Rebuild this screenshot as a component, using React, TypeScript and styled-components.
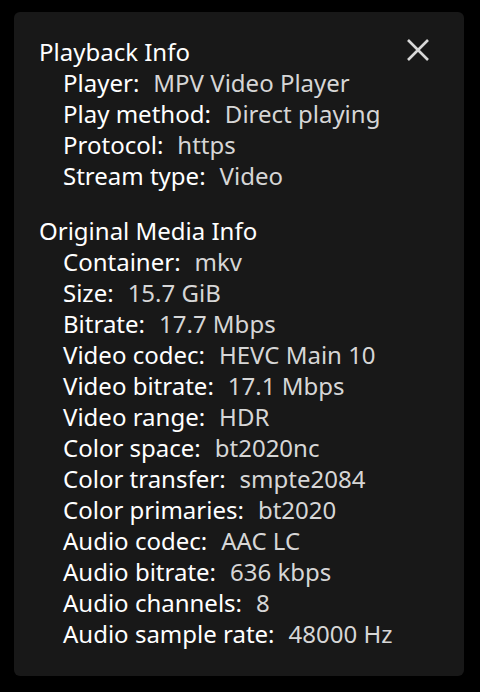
import React from "react";
import styled, { createGlobalStyle } from "styled-components";

const Global = createGlobalStyle`
  html, body { margin: 0; padding: 0; background: #000; }
  body { font-family: "Noto Sans", "Open Sans", sans-serif; }
`;

const Page = styled.div`
  width: 480px;
  height: 692px;
  padding: 12px 16px 16px 14px;
  box-sizing: border-box;
`;

const Panel = styled.div`
  position: relative;
  width: 450px;
  height: 664px;
  box-sizing: border-box;
  background: #181818;
  border-radius: 6px;
  padding: 24px 25px;
  color: #fff;
  font-size: 24px;
  line-height: 31px;
`;

const Close = styled.button`
  position: absolute;
  top: 22px;
  right: 30px;
  width: 32px;
  height: 32px;
  padding: 0;
  border: 0;
  background: transparent;
  display: flex;
  align-items: center;
  justify-content: center;
  cursor: pointer;
`;

const Section = styled.div<{ $gap?: boolean }>`
  margin-top: ${(p) => (p.$gap ? "24px" : "0")};
`;

const Title = styled.div`
  color: #fff;
`;

const Row = styled.div`
  padding-left: 24px;
  white-space: nowrap;
`;

const Label = styled.span`
  color: #fff;
`;

const Value = styled.span`
  color: #d6d6d6;
  margin-left: 14px;
`;

const sections: { title: string; rows: [string, string][] }[] = [
  {
    title: "Playback Info",
    rows: [
      ["Player", "MPV Video Player"],
      ["Play method", "Direct playing"],
      ["Protocol", "https"],
      ["Stream type", "Video"],
    ],
  },
  {
    title: "Original Media Info",
    rows: [
      ["Container", "mkv"],
      ["Size", "15.7 GiB"],
      ["Bitrate", "17.7 Mbps"],
      ["Video codec", "HEVC Main 10"],
      ["Video bitrate", "17.1 Mbps"],
      ["Video range", "HDR"],
      ["Color space", "bt2020nc"],
      ["Color transfer", "smpte2084"],
      ["Color primaries", "bt2020"],
      ["Audio codec", "AAC LC"],
      ["Audio bitrate", "636 kbps"],
      ["Audio channels", "8"],
      ["Audio sample rate", "48000 Hz"],
    ],
  },
];

export default function App() {
  return (
    <>
      <Global />
      <Page>
        <Panel>
          <Close aria-label="Close">
            <svg width="24" height="24" viewBox="0 0 24 24">
              <path d="M2 2 L22 22 M22 2 L2 22" stroke="#d8d8d8" strokeWidth="2.6" fill="none" />
            </svg>
          </Close>
          {sections.map((s, i) => (
            <Section key={s.title} $gap={i > 0}>
              <Title>{s.title}</Title>
              {s.rows.map(([l, v]) => (
                <Row key={l}>
                  <Label>{l}:</Label>
                  <Value>{v}</Value>
                </Row>
              ))}
            </Section>
          ))}
        </Panel>
      </Page>
    </>
  );
}
